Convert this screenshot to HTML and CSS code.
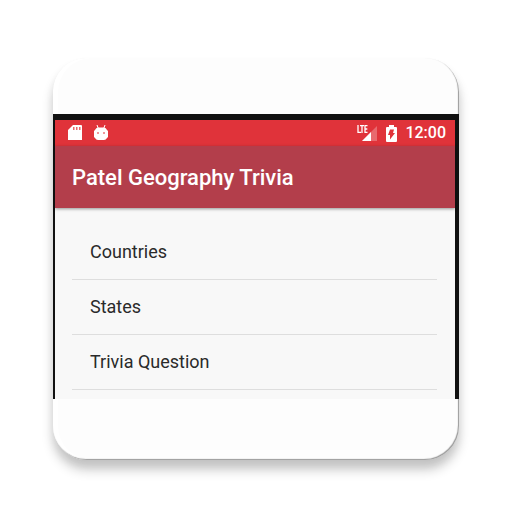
FILE: index.html
```
<!DOCTYPE html>
<html lang="en">
<head>
<meta charset="utf-8">
<meta name="viewport" content="width=device-width, initial-scale=1">
<title>Patel Geography Trivia</title>
<link rel="stylesheet" href="styles.css">
</head>
<body>
<main class="card">
  <div class="phone">
    <div class="status">
      <svg class="sd" width="14" height="16" viewBox="0 0 14 16" aria-hidden="true">
        <path fill="#fff" d="M5 0h8a1 1 0 0 1 1 1v14H0V5z"/>
        <path fill="#e8686c" d="M5 2h1.500v3H5zM8 2h1.500v3H8zM11 2h1.500v3H11z"/>
      </svg>
      <svg class="droid" width="14" height="16" viewBox="0 0 14 16" aria-hidden="true">
        <path stroke="#fff" fill="none" d="M3 0 4.500 4M11 0 9.500 4"/>
        <path fill="#fff" d="M4 2.500h6q2 0 3 2.500l1 1v6l-1 1q-1 2-3 2H4q-2 0-3-2l-1-1V6l1-1q1-2.500 3-2.500z"/>
        <circle cx="4" cy="8" r="1" fill="#ea757a"/>
        <circle cx="10" cy="8" r="1" fill="#ea757a"/>
      </svg>
      <svg class="signal" width="20" height="17" viewBox="0 0 20 17" aria-hidden="true">
        <path fill="#e8696e" d="M20 1v15H5z"/>
        <path fill="#e0333a" d="M0 0h12v9H0z"/>
        <path fill="#fff" d="M14 7v9H5z"/>
        <path stroke="#fff" stroke-width="1.300" fill="none" d="M1 0v7.300h3M3 .7h4M5 .7V8M10.500 .7H8v6.600h2.500M8 4h2.300"/>
      </svg>
      <svg class="battery" width="11" height="17" viewBox="0 0 11 17" aria-hidden="true">
        <path fill="#fff" d="M3 0h5v2h2a1 1 0 0 1 1 1v13a1 1 0 0 1-1 1H1a1 1 0 0 1-1-1V3a1 1 0 0 1 1-1h2z"/>
        <path fill="#e0333a" d="M4 4.500h4L7 8h2l-5 6.500V10H2z"/>
      </svg>
      <time>12:00</time>
    </div>
    <header class="bar"><h1>Patel Geography Trivia</h1></header>
    <ul class="list">
      <li>Countries</li>
      <li>States</li>
      <li>Trivia Question</li>
    </ul>
  </div>
</main>
</body>
</html>
```
FILE: styles.css
```
* {
  box-sizing: border-box;
}

body {
  margin: 0;
  padding: 58px 53px 53px;
  background: #fff;
  font-family: Roboto, "Liberation Sans", sans-serif;
}

.card {
  padding: 56px 0 61px;
  border-radius: 34px;
  background: #fdfdfd;
  box-shadow: inset -1px -1px 1px #999, inset 5px 0 1px #fff, 0 10px 12px rgba(0, 0, 0, 0.2), 0 6px 8px rgba(0, 0, 0, 0.06);
}

.phone {
  border: solid #111;
  border-width: 6px 4px 0 2px;
  background: #f8f8f8;
  padding-bottom: 9px;
}

.status {
  display: flex;
  align-items: center;
  height: 26px;
  padding: 0 9px 0 13px;
  background: #e0333a;
}

.droid {
  margin-left: 12px;
}

.signal {
  margin-left: auto;
}

.battery {
  margin: 0 8px 0 9px;
}

.status time {
  color: #fff;
  font-size: 16px;
  font-weight: 500;
  line-height: 20px;
}

.bar {
  padding: 17px 17px 16px;
  background: #b33e4b;
  box-shadow: 0 1px 3px rgba(0, 0, 0, 0.4);
}

.bar h1 {
  margin: 0;
  color: #fff;
  font-size: 22px;
  font-weight: 500;
  line-height: 29px;
}

.list {
  margin: 0;
  padding: 17px 18px 0 17px;
  list-style: none;
}

.list li {
  padding: 17px 18px;
  border-bottom: 1px solid #dedede;
  color: #2a2a2a;
  font-size: 18px;
  line-height: 20px;
}
```
